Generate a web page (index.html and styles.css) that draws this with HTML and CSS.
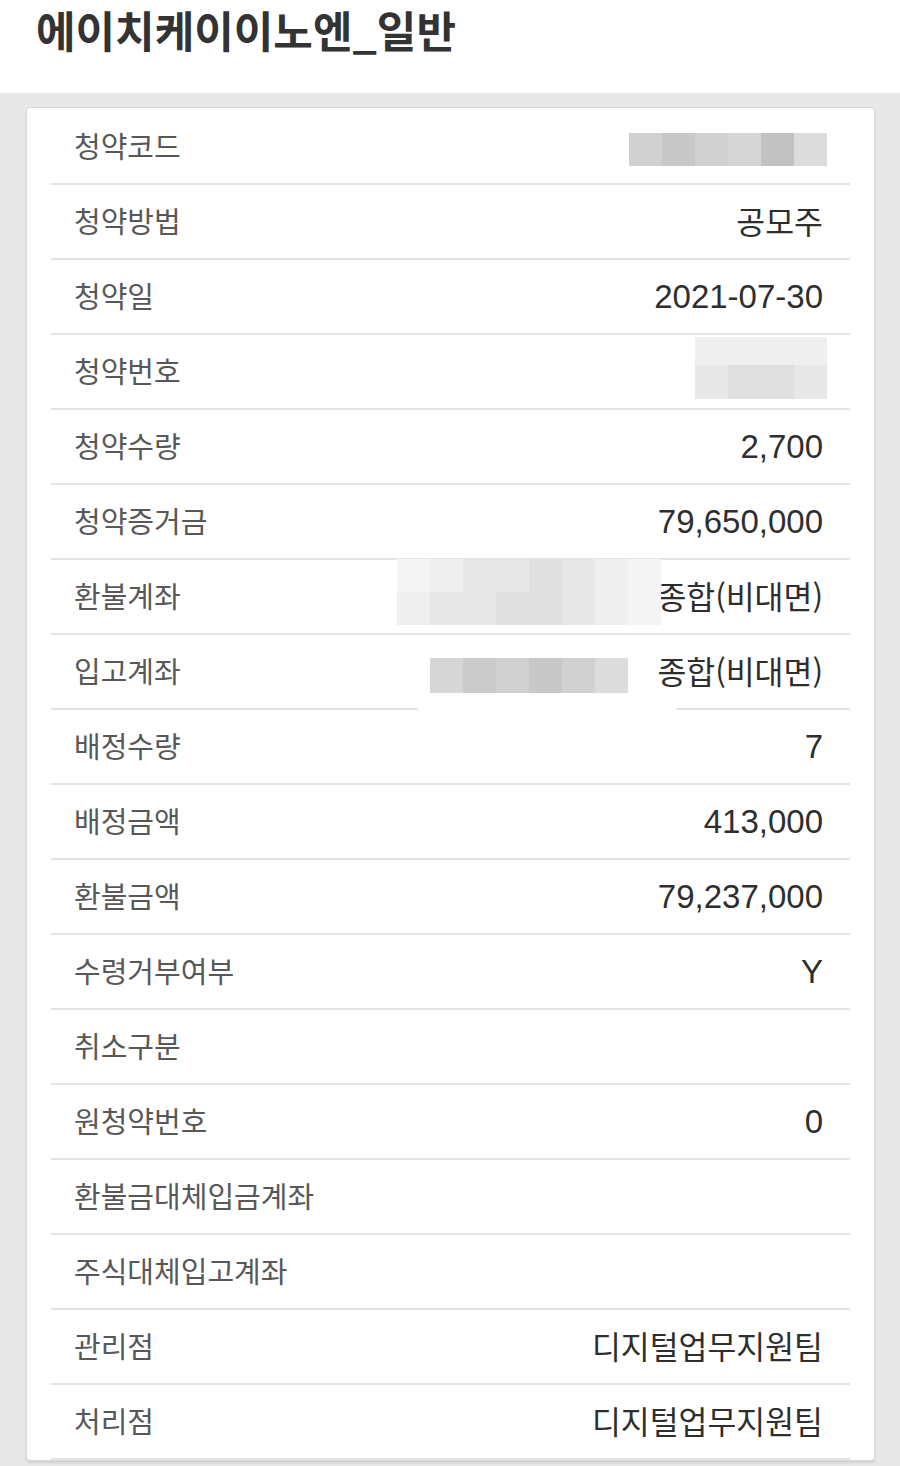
FILE: index.html
```html
<!DOCTYPE html>
<html lang="ko">
<head>
<meta charset="utf-8">
<title>에이치케이이노엔_일반</title>
<link rel="stylesheet" href="styles.css">
</head>
<body>
<header class="head"><h1 class="title">에이치케이이노엔_일반</h1></header>
<main class="wrap">
  <section class="card">
    <div class="row"><span class="label">청약코드</span><span class="value"></span>
      <div class="blur blur-code"><i class="g3"></i><i class="g5"></i><i class="g3"></i><i class="g2"></i><i class="g6"></i><i class="g1"></i></div>
    </div>
    <div class="row"><span class="label">청약방법</span><span class="value ko">공모주</span></div>
    <div class="row"><span class="label">청약일</span><span class="value num">2021-07-30</span></div>
    <div class="row"><span class="label">청약번호</span><span class="value"></span>
      <div class="blur blur-no"><i class="f1"></i><i class="f1"></i><i class="f1"></i><i class="f1"></i><i class="f2"></i><i class="f3"></i><i class="f3"></i><i class="f2"></i></div>
    </div>
    <div class="row"><span class="label">청약수량</span><span class="value num">2,700</span></div>
    <div class="row"><span class="label">청약증거금</span><span class="value num">79,650,000</span></div>
    <div class="row"><span class="label">환불계좌</span><span class="value ko">종합(비대면)</span>
      <div class="blur blur-refund"><i class="f0"></i><i class="f1"></i><i class="f2"></i><i class="f2"></i><i class="f3"></i><i class="f2"></i><i class="f1"></i><i class="f0"></i><i class="f1"></i><i class="f2"></i><i class="f2"></i><i class="f3"></i><i class="f3"></i><i class="f2"></i><i class="f1"></i><i class="f0"></i></div>
    </div>
    <div class="row"><span class="label">입고계좌</span><span class="value ko">종합(비대면)</span>
      <div class="mask"></div>
      <div class="blur blur-in"><i class="g2"></i><i class="g4"></i><i class="g3"></i><i class="g5"></i><i class="g3"></i><i class="g1"></i></div>
    </div>
    <div class="row"><span class="label">배정수량</span><span class="value num">7</span></div>
    <div class="row"><span class="label">배정금액</span><span class="value num">413,000</span></div>
    <div class="row"><span class="label">환불금액</span><span class="value num">79,237,000</span></div>
    <div class="row"><span class="label">수령거부여부</span><span class="value num">Y</span></div>
    <div class="row"><span class="label">취소구분</span><span class="value"></span></div>
    <div class="row"><span class="label">원청약번호</span><span class="value num">0</span></div>
    <div class="row"><span class="label">환불금대체입금계좌</span><span class="value"></span></div>
    <div class="row"><span class="label">주식대체입고계좌</span><span class="value"></span></div>
    <div class="row"><span class="label">관리점</span><span class="value ko">디지털업무지원팀</span></div>
    <div class="row"><span class="label">처리점</span><span class="value ko">디지털업무지원팀</span></div>
  </section>
</main>
</body>
</html>
```
FILE: styles.css
```css
* { box-sizing: border-box; }
html, body { margin: 0; padding: 0; }
body {
  background: #e8e8e8;
  font-family: "Noto Sans CJK KR", "Noto Sans", sans-serif;
  width: 900px;
  height: 1466px;
  overflow: hidden;
}
.head {
  background: #ffffff;
  height: 93px;
  display: flex;
  align-items: flex-start;
  padding: 8px 0 0 36px;
}
.title {
  margin: 0;
  font-size: 43px;
  font-weight: 700;
  color: #333333;
  line-height: 1;
}
.wrap {
  padding: 14px 25px 0 26px;
}
.card {
  background: #ffffff;
  border: 1px solid #d8d8d8;
  border-radius: 4px;
  box-shadow: 0 2px 3px rgba(0,0,0,0.10);
  padding: 2px 24px 0 24px;
}
.row {
  position: relative;
  height: 75px;
  border-bottom: 2px solid #e4e4e4;
  display: flex;
  align-items: center;
  justify-content: space-between;
  padding: 0 27px 0 23px;
}
.label {
  font-size: 29px;
  color: #585858;
  margin-top: -3px;
}
.value {
  color: #2e2e2e;
}
.value.num {
  font-family: "Liberation Sans", "Noto Sans CJK KR", sans-serif;
  font-size: 33px;
}
.value.ko {
  font-size: 31.4px;
  margin-top: -3px;
}
.blur {
  position: absolute;
  display: grid;
}
.blur i { display: block; }
.blur-code {
  left: 578px; top: 23px;
  grid-template-columns: repeat(6, 33px);
  grid-auto-rows: 33px;
}
.blur-no {
  left: 644px; top: 2px;
  grid-template-columns: repeat(4, 33px);
  grid-auto-rows: 28px 34px;
}
.blur-refund {
  left: 346px; top: -1px;
  grid-template-columns: repeat(8, 33px);
  grid-auto-rows: 33px;
}
.blur-in {
  left: 379px; top: 23px;
  grid-template-columns: repeat(6, 33px);
  grid-auto-rows: 35px;
}
.mask {
  position: absolute;
  left: 367px; bottom: -2px;
  width: 258px; height: 20px;
  background: #ffffff;
}
.g1 { background: #dcdcdc; }
.g2 { background: #d6d6d6; }
.g3 { background: #d1d1d1; }
.g4 { background: #cbcbcb; }
.g5 { background: #c8c8c8; }
.g6 { background: #c2c2c2; }
.f0 { background: #f4f4f4; }
.f1 { background: #efefef; }
.f2 { background: #e7e7e7; }
.f3 { background: #e0e0e0; }
```
